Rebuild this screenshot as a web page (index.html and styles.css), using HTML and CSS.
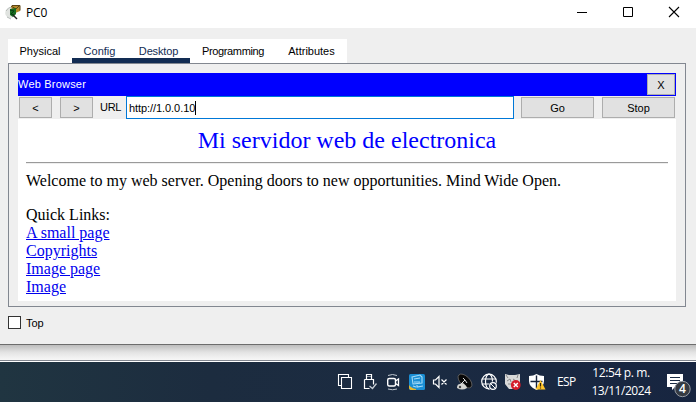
FILE: index.html
```
<!DOCTYPE html>
<html lang="es">
<head>
<meta charset="utf-8">
<title>PC0</title>
<link rel="stylesheet" href="styles.css">
</head>
<body>
<main class="window">
  <header class="titlebar">
    <svg class="app-icon" width="18" height="18" viewBox="0 0 18 18">
      <ellipse cx="5.500" cy="8" rx="5.300" ry="5" fill="#e0e3e0"/>
      <path d="M1 6q2-4 6-4M2 12l4 2" stroke="#b5bab7" fill="none"/>
      <path d="M6 1l9-1v6l-7 3z" fill="#b58b2b"/>
      <path d="M6 1l5 3 4-4M7 .500h8v5" stroke="#5d4414" fill="none"/>
      <path d="M5 4l6-1v6l-3 3-3-2z" fill="#176b20"/>
      <path d="M5 5l4 1-3 3 3 1" stroke="#073d12" fill="none"/>
      <path d="M8 10l4 4" stroke="#222" stroke-width="1.500"/>
    </svg>
    <span class="title">PC0</span>
    <div class="controls">
      <svg width="46" height="24" viewBox="0 0 46 24"><path d="M18 12.500h10" stroke="#000"/></svg>
      <svg width="46" height="24" viewBox="0 0 46 24"><path d="M18.500 7.500h9v9h-9z" stroke="#000" fill="none"/></svg>
      <svg width="46" height="24" viewBox="0 0 46 24"><path d="M18 7l10 10M28 7l-10 10" stroke="#000" stroke-width="1.1"/></svg>
    </div>
  </header>
  <nav class="tabs">
    <span class="tab physical">Physical</span>
    <span class="tab config active">Config</span>
    <span class="tab desktop active">Desktop</span>
    <span class="tab programming">Programming</span>
    <span class="tab attributes">Attributes</span>
  </nav>
  <section class="panel">
    <div class="browser-title"><span>Web Browser</span><button class="close">X</button></div>
    <div class="toolbar">
      <button class="arrow">&lt;</button>
      <button class="arrow">&gt;</button>
      <span class="url-label">URL</span>
      <div class="url"><span>http://1.0.0.10</span><i class="caret"></i></div>
      <button class="go">Go</button>
      <button class="stop">Stop</button>
    </div>
    <article class="page">
      <h1>Mi servidor web de electronica</h1>
      <hr>
      <p class="welcome">Welcome to my web server. Opening doors to new opportunities. Mind Wide Open.</p>
      <div class="links">
        <span>Quick Links:</span>
        <a href="#">A small page</a>
        <a href="#">Copyrights</a>
        <a href="#">Image page</a>
        <a href="#">Image</a>
      </div>
    </article>
  </section>
  <label class="top"><span class="box"></span><span>Top</span></label>
</main>
<div class="shadow"></div>
<footer class="taskbar">
  <div class="tray">
    <svg viewBox="0 0 24 24"><path d="M8.500 15.500h-3v-11h10v3M8.500 7.500h10v11h-10z" fill="none" stroke="#fff" stroke-width="1.100"/></svg>
    <svg viewBox="0 0 24 24"><path d="M9.500 9.500v-5h5v5M7.500 9.500h9v5M7.500 9.500v9h5" fill="none" stroke="#fff" stroke-width="1.200"/><path d="M10.500 6h1v1h-1zM12.500 6h1v1h-1z" fill="#fff"/><path d="M12.500 16l3 2.500 4-5" fill="none" stroke="#c4cbd3" stroke-width="1.300"/></svg>
    <svg viewBox="0 0 24 24"><rect x="6.700" y="8.500" width="7.800" height="7.500" rx="1.500" fill="none" stroke="#fff" stroke-width="1.400"/><path d="M14.500 11l3-2v6.500l-3-2" fill="none" stroke="#fff" stroke-width="1.300"/><path d="M7 5.500q4.500-2 9 0M7 19q4.500 1.500 9 0" fill="none" stroke="#c0c8d0"/></svg>
    <svg viewBox="0 0 24 24"><rect x="4" y="4" width="16" height="16" rx="1.500" fill="#1a8ed4"/><path d="M4 15q2 3 7 4v1H5.500L4 18.500z" fill="#e4b62e"/><path d="M7 7l8-2 2 2v6l-9 1zM9 9l6-1M9 12h6M12 15v2l6-1M8 16l3 1" fill="none" stroke="#a6dcf8" stroke-width="1.100"/></svg>
    <svg viewBox="0 0 24 24"><path d="M4.500 10h2l3.500-3.500v11l-3.500-3.500h-2zM12.500 9.500l5 5M17.500 9.500l-5 5" fill="none" stroke="#fff" stroke-width="1.200"/></svg>
    <svg viewBox="0 0 24 24"><ellipse cx="12" cy="11" rx="8.600" ry="4.700" transform="rotate(45 12 11)" fill="#080808" stroke="#77736d" stroke-width=".7"/><path d="M4 18q0-4 3-4l3-1q4 3 4 5-5 3-10 0z" fill="#d4d4d0"/><path d="M7 15l5-5M12 10l-2-2M12 10l2 3" stroke="#ddd"/><circle cx="7" cy="17" r="1.200" fill="#444"/></svg>
    <svg viewBox="0 0 24 24"><g fill="none" stroke="#fff" stroke-width="1.200"><circle cx="12" cy="11.500" r="7.300"/><ellipse cx="12" cy="11.500" rx="3.500" ry="7.300"/><path d="M5 9h14M5 14h14"/></g><circle cx="16" cy="16" r="4.500" fill="#1b2c45"/><circle cx="16" cy="16" r="3.300" fill="none" stroke="#fff" stroke-width="1.200"/><path d="M14 14l4 4" stroke="#fff"/></svg>
    <svg viewBox="0 0 24 24"><path d="M4 4l4 1h6l5-1v10l-5 5H8l-4-5z" fill="#d8d8d8"/><path d="M5 5l2 3M17 5l-1 3M6 11l3-2 1 3M12 9l3 2M7 14h4" stroke="#888" fill="none"/><circle cx="14.800" cy="15" r="4.900" fill="#d51e2b"/><path d="M12.800 13l4 4M16.800 13l-4 4" stroke="#fff" stroke-width="1.400"/></svg>
    <svg viewBox="0 0 24 24"><path d="M11.500 4q3 2 7.500 2v5q0 6-7.500 9-7.500-3-7.500-9V6q4.500 0 7.500-2" fill="#fff"/><path d="M11.500 5.500v13M5.500 11.500h12" stroke="#17233a" stroke-width="1.400"/><path d="M15.500 10l5 9.500h-10z" fill="#ffc52a"/><path d="M15.500 13v3.500M15.500 17.500v1" stroke="#342508" stroke-width="1.200"/></svg>
  </div>
  <span class="lang">ESP</span>
  <div class="clock"><span class="time">12:54 p. m.</span><span class="date">13/11/2024</span></div>
  <div class="notice">
    <svg width="28" height="30" viewBox="0 0 28 30"><path d="M0 2h16v13H8l-3 3v-3H0z" fill="#fff"/><path d="M3 5.500h10M3 8.500h10M3 11.500h7" stroke="#1b2c45"/><circle cx="15.500" cy="17" r="7.700" fill="#353a42" stroke="#969ca5"/></svg>
    <span class="count">4</span>
  </div>
</footer>
</body>
</html>
```
FILE: styles.css
```
* { box-sizing: border-box; }
body {
  margin: 0;
  width: 696px;
  height: 402px;
  overflow: hidden;
  background: #fff;
  font: 11px/14px "Liberation Sans", Arial, sans-serif;
  color: #000;
}
.window {
  height: 345px;
  background: #efefef;
  border-bottom: 1px solid #6d6d6d;
}
.titlebar {
  display: flex;
  align-items: flex-start;
  height: 28px;
  padding-left: 5px;
  background: #fff;
}
.app-icon { margin-top: 5px; }
.title {
  margin: 5px 0 0 3px;
  font: 12px/16px "Open Sans", sans-serif;
  letter-spacing: -.15px;
}
.controls { display: flex; margin: 0 -1px 0 auto; }
.tabs {
  display: flex;
  width: 339px;
  height: 24px;
  margin: 11px 0 0 8px;
  background: #fff;
}
.tab { padding-top: 5px; text-align: center; white-space: nowrap; }
.physical { width: 64px; }
.config { width: 55px; }
.desktop { width: 63px; letter-spacing: -.15px; }
.programming { width: 86px; letter-spacing: -.35px; }
.attributes { width: 71px; }
.active { color: #122c53; border-bottom: 5px solid #122c53; }
.panel {
  width: 678px;
  height: 244px;
  margin-left: 8px;
  padding: 9px;
  border: 1px solid #828790;
}
.browser-title {
  display: flex;
  justify-content: space-between;
  width: 658px;
  height: 23px;
  padding: 1px;
  background: #00f;
  color: #fff;
}
.browser-title span { margin: 3px 0 0 -1px; letter-spacing: .2px; }
button {
  padding: 0;
  border: 1px solid #adadad;
  background: #e1e1e1;
  color: #000;
  font: inherit;
}
.close { width: 28px; height: 21px; padding-top: 1px; }
.toolbar {
  display: flex;
  width: 658px;
  height: 23px;
  padding-left: 1px;
}
.toolbar button { height: 21px; margin-top: 1px; }
.arrow { width: 33px; margin-right: 8px; }
.url-label { width: 26px; margin-left: -1px; padding-top: 4px; letter-spacing: -.3px; }
.url {
  display: flex;
  width: 388px;
  height: 23px;
  padding: 4px 0 0 2px;
  background: #fff;
  border: 1px solid #0078d7;
  letter-spacing: -.07px;
}
.caret { width: 1px; height: 14px; background: #000; }
.go { width: 73px; margin-left: 7px; }
.stop { width: 73px; margin-left: 8px; }
.page {
  width: 658px;
  height: 182px;
  padding: 7px 8px 0;
  background: #fff;
  font: 16px/18px "Liberation Serif", "Times New Roman", serif;
}
h1 {
  height: 28px;
  margin: 0;
  color: #00f;
  font-size: 24px;
  line-height: 28px;
  font-weight: 400;
  text-align: center;
}
hr { height: 2px; margin: 8px 0; border: 0; border-top: 1px solid #9a9a9a; border-bottom: 1px solid #eee; }
.welcome { margin: 0 0 16px; white-space: nowrap; }
.links { display: flex; flex-direction: column; align-items: flex-start; }
.links a { color: #00e; }
.top { display: flex; gap: 5px; margin: 9px 0 0 8px; }
.box { width: 13px; height: 13px; background: #fff; border: 1px solid #333; }
.shadow {
  height: 17px;
  background: linear-gradient(#bdbdbd, #e3e3e3 45%, #f6f6f6 90%);
  border-bottom: 1px solid #fff;
  box-shadow: inset 0 -1px #828790;
}
.taskbar {
  display: flex;
  height: 40px;
  padding-left: 333px;
  color: #fff;
  background: linear-gradient(90deg, #203541, #1c2c3f 30%, #1b2b42 60%, #172540);
  font-family: "Open Sans", sans-serif;
}
.tray { display: flex; width: 216px; padding-top: 8px; }
.tray svg { width: 24px; height: 24px; }
.lang { width: 34px; padding: 13px 0 0 8px; font-size: 12px; letter-spacing: -.6px; }
.clock {
  display: flex;
  flex-direction: column;
  width: 76px;
  padding-top: 2px;
  align-items: center;
  font-size: 12px;
  line-height: 18px;
  letter-spacing: -.45px;
  white-space: nowrap;
}
.time { letter-spacing: -.35px; }
.notice { position: relative; margin: 10px 0 0 8px; }
.count {
  position: absolute;
  left: 11px;
  top: 10px;
  width: 9px;
  text-align: center;
  font-size: 12px;
  font-weight: 600;
}
```
